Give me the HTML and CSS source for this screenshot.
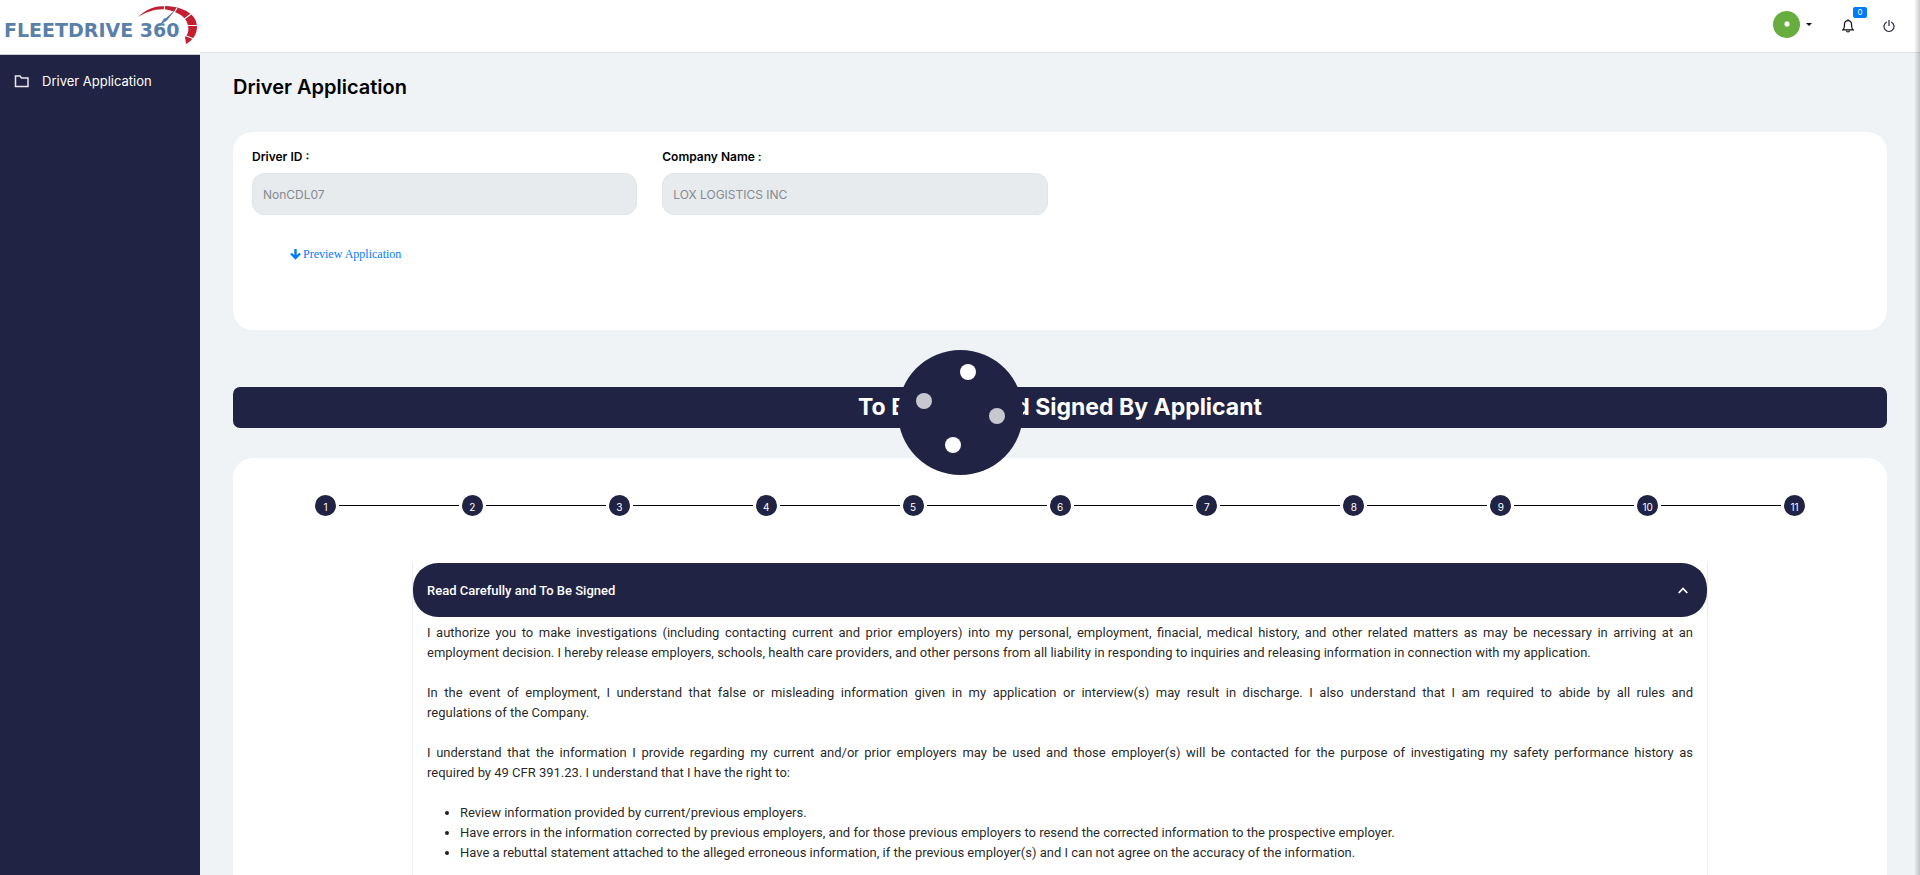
FILE: index.html
```html
<!DOCTYPE html>
<html lang="en">
<head>
<meta charset="utf-8">
<meta name="viewport" content="width=device-width, initial-scale=1">
<title>Driver Application</title>
<link rel="stylesheet" href="styles.css">
</head>
<body>
<div class="app">
  <aside class="sidebar">
    <a class="logo" href="#" aria-label="FleetDrive 360">
      <svg width="200" height="54" viewBox="0 0 200 54">
        <text class="logo-text" x="4" y="37">FLEETDRIVE 360</text>
        <path fill="#c41f30" d="M138 17C146 9 155 6 166 6C185 7 197 15 197 27C197 34 193 40 186 44L185 37C188 34 189 31 188 26C187 17 178 12 166 9.500C155 8.500 147 12 138 17Z"/>
        <g stroke="#fff" stroke-width="1.200">
          <path d="M164.500 5V12M177 8L172 16M191 14L183 20M199 25.500H186M194 39L184 35"/>
        </g>
        <path fill="#5a7fa8" d="M176 9L167 20.500L163 23L161 23L164 18.500L166 18Z"/>
      </svg>
    </a>
    <nav class="menu">
      <a class="menu-item" href="#">
        <svg width="16" height="14" viewBox="0 0 16 14" fill="none" stroke="#e8e8ee" stroke-width="1.500"><path d="M1.500 2H6L7.500 4H14V12.500H1.500Z"/></svg>
        <span>Driver Application</span>
      </a>
    </nav>
  </aside>

  <div class="page">
    <header class="topbar">
      <button class="account" type="button" aria-label="Account">
        <span class="avatar">
          <svg width="8" height="8" viewBox="0 0 8 8" stroke="#fff" stroke-width="1.200"><path d="M4 1V7M1 4H7M2 2L6 6M6 2L2 6"/></svg>
        </span>
        <span class="caret"></span>
      </button>
      <button class="icon-button bell" type="button" aria-label="Notifications">
        <svg width="12" height="14" viewBox="0 0 12 14" fill="none" stroke="#111" stroke-width="1.200"><path d="M1 10.800C2.500 9.500 2.500 8 2.500 5.500C2.500 3 4 1.600 6 1.600S9.500 3 9.500 5.500C9.500 8 9.500 9.500 11 10.800ZM6 .300V1.600"/><path d="M4.500 11.500A1.500 1.500 0 0 0 7.500 11.500"/></svg>
        <span class="badge">0</span>
      </button>
      <button class="icon-button" type="button" aria-label="Log out">
        <svg width="12" height="14" viewBox="0 0 12 14" fill="none" stroke="#2a2340" stroke-width="1.200"><path d="M3.800 3A5 5 0 1 0 8.200 3M6 1V7"/></svg>
      </button>
    </header>

    <main class="content">
      <h1 class="title">Driver Application</h1>

      <section class="card details">
        <div class="fields">
          <div class="field">
            <label for="driver-id">Driver ID :</label>
            <input id="driver-id" type="text" value="NonCDL07" disabled>
          </div>
          <div class="field">
            <label for="company">Company Name :</label>
            <input id="company" type="text" value="LOX LOGISTICS INC" disabled>
          </div>
        </div>
        <a class="preview" href="#">
          <svg width="11" height="11" viewBox="0 0 11 11" fill="none" stroke="#007bff" stroke-width="2.400"><path d="M5.500 0V9M1 4.500L5.500 9L10 4.500"/></svg>
          <span>Preview Application</span>
        </a>
      </section>

      <h2 class="banner">To Be Read and Signed By Applicant</h2>

      <section class="card form">
        <div class="steps">
          <button class="step" type="button">1</button><span class="line"></span>
          <button class="step" type="button">2</button><span class="line"></span>
          <button class="step" type="button">3</button><span class="line"></span>
          <button class="step" type="button">4</button><span class="line"></span>
          <button class="step" type="button">5</button><span class="line"></span>
          <button class="step" type="button">6</button><span class="line"></span>
          <button class="step" type="button">7</button><span class="line"></span>
          <button class="step" type="button">8</button><span class="line"></span>
          <button class="step" type="button">9</button><span class="line"></span>
          <button class="step" type="button">10</button><span class="line"></span>
          <button class="step" type="button">11</button>
        </div>

        <div class="panel">
          <button class="panel-head" type="button" aria-expanded="true">
            <span>Read Carefully and To Be Signed</span>
            <svg width="10" height="7" viewBox="0 0 10 7" fill="none" stroke="#fff" stroke-width="1.800"><path d="M.700 6L5 1.500L9.300 6"/></svg>
          </button>
          <div class="panel-body">
            <p>I authorize you to make investigations (including contacting current and prior employers) into my personal, employment, finacial, medical history, and other related matters as may be necessary in arriving at an employment decision. I hereby release employers, schools, health care providers, and other persons from all liability in responding to inquiries and releasing information in connection with my application.</p>
            <p>In the event of employment, I understand that false or misleading information given in my application or interview(s) may result in discharge. I also understand that I am required to abide by all rules and <span class="keep">regulations of the Company.</span></p>
            <p>I understand that the information I provide regarding my current and/or prior employers may be used and those employer(s) will be contacted for the purpose of investigating my safety performance history as <span class="keep">required by 49 CFR 391.23.</span> I understand that I have the right to:</p>
            <ul>
              <li>Review information provided by current/previous employers.</li>
              <li>Have errors in the information corrected by previous employers, and for those previous employers to resend the corrected information to the prospective employer.</li>
              <li>Have a rebuttal statement attached to the alleged erroneous information, if the previous employer(s) and I can not agree on the accuracy of the information.</li>
            </ul>
          </div>
        </div>
      </section>
    </main>
  </div>
</div>

<div class="loader" role="status" aria-label="Loading">
  <svg width="125" height="125" viewBox="0 0 125 125" fill="#fff">
    <circle cx="70" cy="22" r="8"/>
    <circle cx="26" cy="51" r="8" opacity=".750"/>
    <circle cx="99" cy="66" r="8" opacity=".750"/>
    <circle cx="55" cy="95" r="8"/>
  </svg>
</div>
<div class="edge-shadow"></div>
</body>
</html>
```
FILE: styles.css
```css
* { box-sizing: border-box; }

body {
  margin: 0;
  background: #eff3f6;
  color: #000;
  font-family: Inter, "Open Sans", sans-serif;
  font-size: 13px;
}

button {
  border: 0;
  padding: 0;
  background: none;
  font: inherit;
  color: inherit;
  cursor: pointer;
}

a { text-decoration: none; }
svg { display: block; }

.app {
  display: grid;
  grid-template-columns: 200px minmax(0, 1fr);
  min-height: 100vh;
}

.sidebar { background: #202343; }

.logo {
  display: block;
  background: #fff;
  border-bottom: 1px solid #ccc;
}

.logo-text {
  fill: #5a7fa8;
  font: bold 19px "DejaVu Sans", sans-serif;
}

.menu { padding: 14px; }

.menu-item {
  display: flex;
  align-items: center;
  gap: 12px;
  height: 24px;
  color: #fff;
}

.page {
  display: flex;
  flex-direction: column;
}

.topbar {
  display: flex;
  justify-content: flex-end;
  align-items: center;
  height: 53px;
  padding: 0 25px 4px 0;
  background: #fff;
  border-bottom: 1px solid #dce3ea;
}

.account {
  display: flex;
  align-items: center;
  gap: 6px;
  margin-right: 30px;
}

.avatar {
  display: grid;
  place-items: center;
  width: 27px;
  height: 27px;
  border-radius: 50%;
  background: #67ad3f;
}

.caret {
  border: 3px solid transparent;
  border-top-color: #111;
  border-bottom: 0;
}

.icon-button {
  position: relative;
  padding-top: 4px;
}

.bell { margin-right: 29px; }

.badge {
  position: absolute;
  left: 11px;
  top: -8px;
  width: 14px;
  height: 11px;
  border-radius: 2px;
  background: #007bff;
  color: #fff;
  font-size: 8px;
  line-height: 11px;
}

.content {
  flex: 1;
  display: flex;
  flex-direction: column;
  padding: 22px 33px 0;
}

.title {
  margin: 0 0 33px;
  font-size: 20px;
  font-weight: 600;
  line-height: 24px;
}

.card {
  background: #fff;
  border-radius: 20px;
}

.details {
  padding: 17px 19px 68px;
}

.fields {
  display: grid;
  grid-template-columns: repeat(4, 1fr);
  gap: 25px;
}

.field label {
  display: block;
  margin-bottom: 8px;
  font-size: 12px;
  font-weight: 600;
  line-height: 16px;
}

.field input {
  display: block;
  width: 100%;
  height: 42px;
  padding: 0 10px;
  border: 1px solid #e0e6ea;
  border-radius: 12px;
  background: #e7ebee;
  color: #868a90;
  font: 12px Inter, "Open Sans", sans-serif;
}

.preview {
  display: flex;
  align-items: center;
  gap: 2px;
  width: fit-content;
  margin: 31px 0 0 38px;
  color: #007bff;
  font: 12px/16px "Liberation Serif", serif;
}

.banner {
  margin: 57px 0 30px;
  border-radius: 7px;
  background: #202343;
  color: #fff;
  font-size: 23px;
  font-weight: 700;
  line-height: 41px;
  text-align: center;
}

.form {
  flex: 1;
  display: flex;
  flex-direction: column;
  padding: 37px 0 0;
  border-radius: 20px 20px 0 0;
}

.steps {
  display: flex;
  align-items: center;
  padding: 0 82px;
}

.step {
  width: 21px;
  height: 21px;
  padding-top: 3px;
  border-radius: 50%;
  background: #202343;
  color: #fff;
  font-size: 10px;
}

.line {
  flex: 1;
  height: 1px;
  margin: 0 3px;
  background: #000;
}

.panel {
  flex: 1;
  margin: 47px 179px 0;
  border: solid #ececee;
  border-width: 0 1px;
  font-family: Roboto, sans-serif;
}

.panel-head {
  display: flex;
  justify-content: space-between;
  align-items: center;
  width: 100%;
  height: 54px;
  padding: 0 19px 0 14px;
  border-radius: 25px;
  background: #202343;
  color: #fff;
  font-weight: 500;
}

.panel-body {
  padding: 6px 14px 0;
  color: rgba(0, 0, 0, 0.87);
  font-size: 13px;
  line-height: 20px;
  text-align: justify;
}

.panel-body p { margin: 0 0 20px; }

.keep { white-space: nowrap; }

.panel-body ul {
  margin: 0;
  padding-left: 33px;
}

.loader {
  position: fixed;
  left: 50%;
  top: 40%;
  margin-left: -62px;
  border-radius: 50%;
  background: #202343;
}

.edge-shadow {
  position: fixed;
  top: 0;
  right: 0;
  bottom: 0;
  width: 6px;
  background: linear-gradient(to right, transparent, rgba(0, 0, 0, 0.2));
}
```
